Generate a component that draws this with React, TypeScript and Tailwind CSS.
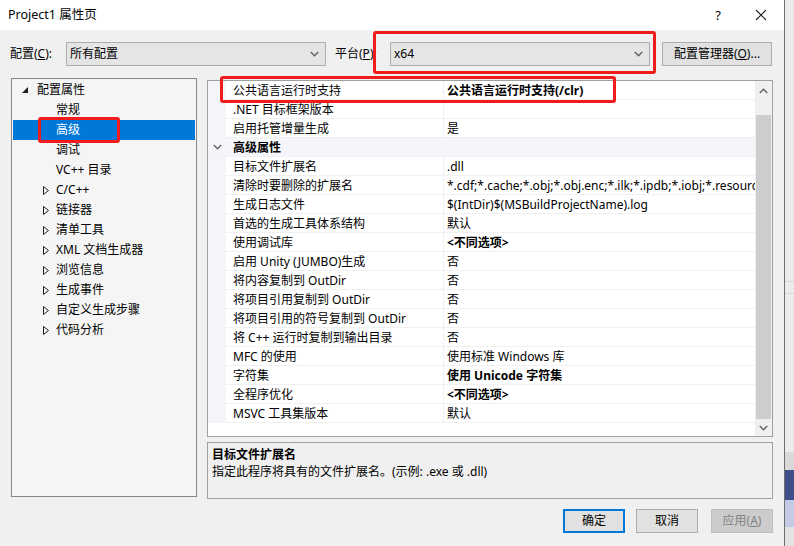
import React from 'react';

type Row = { name: string; value?: string; bold?: boolean; category?: boolean };

const rows: Row[] = [
  { name: '公共语言运行时支持', value: '公共语言运行时支持(/clr)', bold: true },
  { name: '.NET 目标框架版本', value: '' },
  { name: '启用托管增量生成', value: '是' },
  { name: '高级属性', category: true },
  { name: '目标文件扩展名', value: '.dll' },
  { name: '清除时要删除的扩展名', value: '*.cdf;*.cache;*.obj;*.obj.enc;*.ilk;*.ipdb;*.iobj;*.resources;*.tlb;*.tli;*.tlh;*.tmp' },
  { name: '生成日志文件', value: '$(IntDir)$(MSBuildProjectName).log' },
  { name: '首选的生成工具体系结构', value: '默认' },
  { name: '使用调试库', value: '<不同选项>', bold: true },
  { name: '启用 Unity (JUMBO)生成', value: '否' },
  { name: '将内容复制到 OutDir', value: '否' },
  { name: '将项目引用复制到 OutDir', value: '否' },
  { name: '将项目引用的符号复制到 OutDir', value: '否' },
  { name: '将 C++ 运行时复制到输出目录', value: '否' },
  { name: 'MFC 的使用', value: '使用标准 Windows 库' },
  { name: '字符集', value: '使用 Unicode 字符集', bold: true },
  { name: '全程序优化', value: '<不同选项>', bold: true },
  { name: 'MSVC 工具集版本', value: '默认' },
];

const treeChildren = [
  { label: '常规' },
  { label: '高级', selected: true },
  { label: '调试' },
  { label: 'VC++ 目录' },
  { label: 'C/C++', expandable: true },
  { label: '链接器', expandable: true },
  { label: '清单工具', expandable: true },
  { label: 'XML 文档生成器', expandable: true },
  { label: '浏览信息', expandable: true },
  { label: '生成事件', expandable: true },
  { label: '自定义生成步骤', expandable: true },
  { label: '代码分析', expandable: true },
];

const Chevron = ({ up = false }: { up?: boolean }) => (
  <svg width="9" height="6" viewBox="0 0 9 6">
    <polyline
      points={up ? '0.8,5 4.5,1.2 8.2,5' : '0.8,1 4.5,4.8 8.2,1'}
      fill="none"
      stroke="#606060"
      strokeWidth="1.4"
    />
  </svg>
);

const Combo = ({ text, width }: { text: string; width: string }) => (
  <div className={`${width} h-6 flex items-center justify-between bg-[#e5e5e5] border border-[#adadad] pl-[3px] pr-[6px]`}>
    <span>{text}</span>
    <Chevron />
  </div>
);

const App: React.FC = () => {
  return (
    <div
      className="w-[794px] h-[546px] flex overflow-hidden text-[12px] text-black leading-4"
      style={{ fontFamily: '"Segoe UI", "Noto Sans", "Noto Sans CJK SC", sans-serif' }}
    >
      <div className="relative w-[785px] h-full flex flex-col bg-[#f0f0f0] border-r border-[#6e6e6e]">
        {/* title bar */}
        <div className="h-[30px] bg-white flex items-center justify-between pl-2 pr-[17px]">
          <span className="text-[12.5px]">Project1 属性页</span>
          <div className="flex items-center gap-[34px]">
            <span className="text-[13px]">?</span>
            <svg width="12" height="12" viewBox="0 0 12 12">
              <path d="M1 1 L11 11 M11 1 L1 11" stroke="#222" strokeWidth="1.1" />
            </svg>
          </div>
        </div>

        {/* config row */}
        <div className="mt-3 h-6 flex items-center pl-[10px]">
          <span className="w-[56px]">配置(<u>C</u>):</span>
          <Combo text="所有配置" width="w-[260px]" />
          <span className="ml-[9px] w-[55px]">平台(<u>P</u>):</span>
          <Combo text="x64" width="w-[260px]" />
          <button className="ml-[12px] w-[110px] h-6 bg-[#e1e1e1] border border-[#adadad]">
            配置管理器(<u>O</u>)...
          </button>
        </div>

        {/* main */}
        <div className="mt-3 flex pl-[11px]">
          {/* tree */}
          <div className="w-[186px] h-[419px] bg-[#f5f5f5] border border-[#828790] pt-[1px]">
            <div className="h-5 flex items-center">
              <svg className="ml-[10px]" width="6" height="6" viewBox="0 0 6 6">
                <polygon points="6,0 6,6 0,6" fill="#1e1e1e" />
              </svg>
              <span className="ml-[9px]">配置属性</span>
            </div>
            {treeChildren.map((item) => (
              <div
                key={item.label}
                className={`h-5 flex items-center mx-[1px] ${item.selected ? 'bg-[#0078d7] text-white' : ''}`}
              >
                <div className="w-[43px] shrink-0 pl-[30px] flex items-center">
                  {item.expandable && (
                    <svg width="6" height="9" viewBox="0 0 6 9">
                      <polygon points="0.5,0.5 5.5,4.5 0.5,8.5" fill="none" stroke="#1e1e1e" strokeWidth="1" />
                    </svg>
                  )}
                </div>
                <span>{item.label}</span>
              </div>
            ))}
          </div>

          {/* right column */}
          <div className="ml-[10px] mt-[2px] w-[566px] flex flex-col">
            <div className="h-[357px] bg-white border border-[#a0a0a0] flex">
              <div className="flex-1 flex flex-col">
                {rows.map((row) =>
                  row.category ? (
                    <div key={row.name} className="h-[19px] flex bg-[#f4f6f9] border-b border-[#eef0f3]">
                      <div className="w-[18px] flex items-center justify-center">
                        <Chevron />
                      </div>
                      <div className="pl-[7px] pt-[2px] flex items-center font-bold">{row.name}</div>
                    </div>
                  ) : (
                    <div key={row.name} className="h-[19px] flex">
                      <div className="w-[18px] bg-[#f3f5f9]" />
                      <div className="w-[217px] pl-[7px] pt-[2px] flex items-center border-b border-[#f0f0f0] whitespace-nowrap">
                        {row.name}
                      </div>
                      <div
                        className={`flex-1 w-0 pl-[3px] pt-[2px] flex items-center border-b border-l border-[#f0f0f0] whitespace-nowrap overflow-hidden ${row.bold ? 'font-bold' : ''}`}
                      >
                        {row.value}
                      </div>
                    </div>
                  )
                )}
              </div>
              {/* scrollbar */}
              <div className="w-[17px] flex flex-col bg-[#f0f0f0]">
                <div className="h-5 flex items-center justify-center">
                  <Chevron up />
                </div>
                <div className="mt-[14px] mx-[1px] h-[304px] bg-[#cdcdcd]" />
                <div className="flex-1 flex items-center justify-center">
                  <Chevron />
                </div>
              </div>
            </div>

            <div className="mt-[5px] h-[57px] bg-[#f0f0f0] border border-[#a0a0a0] px-1 pt-[3px] leading-[17px]">
              <div className="font-bold">目标文件扩展名</div>
              <div>指定此程序将具有的文件扩展名。(示例: .exe 或 .dll)</div>
            </div>
          </div>
        </div>

        {/* buttons */}
        <div className="mt-[10px] flex justify-end pr-[11px]">
          <button className="w-[62px] h-6 bg-[#e1e1e1] border-2 border-[#0078d7]">确定</button>
          <button className="ml-[11px] w-[62px] h-6 bg-[#e1e1e1] border border-[#adadad]">取消</button>
          <button className="ml-[13px] w-[62px] h-6 bg-[#cccccc] border border-[#bfbfbf] text-[#838383]">
            应用(<u>A</u>)
          </button>
        </div>

        {/* red annotation boxes */}
        <div className="absolute left-[373px] top-[31px] w-[283px] h-[43px] border-[3px] border-[#f01c1c] rounded-[3px]" />
        <div className="absolute left-[38px] top-[117px] w-[82px] h-[26px] border-[3px] border-[#f01c1c] rounded-[3px]" />
        <div className="absolute left-[220px] top-[76px] w-[396px] h-[27px] border-[3px] border-[#f01c1c] rounded-[3px]" />
      </div>

      {/* window behind the dialog */}
      <div className="flex-1 flex flex-col">
        <div className="h-[281px] bg-[#ebebeb]" />
        <div className="h-px bg-[#d6d6d6]" />
        <div className="h-[11px] bg-[#ebebeb]" />
        <div className="h-px bg-[#d6d6d6]" />
        <div className="h-[158px] bg-[#ebebeb]" />
        <div className="h-[18px] bg-[#d9d9d9]" />
        <div className="h-[30px] bg-[#3f4f8a]" />
        <div className="h-[27px] bg-[#c5cae6]" />
        <div className="flex-1 bg-[#e3e3e3]" />
      </div>
    </div>
  );
};

export default App;
